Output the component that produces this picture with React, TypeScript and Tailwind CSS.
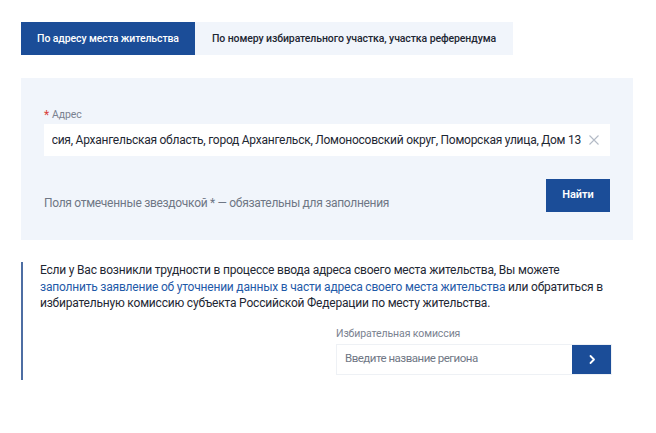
import React from "react";

const font = { fontFamily: "Roboto, 'Noto Sans', sans-serif" };

function XIcon() {
  return (
    <svg width="12" height="12" viewBox="0 0 12 12" fill="none" stroke="#b3bac6" strokeWidth="1.1">
      <path d="M1.5 1.5 L10.5 10.5 M10.5 1.5 L1.5 10.5" />
    </svg>
  );
}

function Chevron() {
  return (
    <svg width="8" height="11" viewBox="0 0 8 11" fill="none" stroke="#ffffff" strokeWidth="1.8" strokeLinecap="round" strokeLinejoin="round">
      <path d="M2.5 2 L6 5.5 L2.5 9" />
    </svg>
  );
}

export default function App() {
  return (
    <div className="w-[656px] h-[433px] bg-white px-[21px] pt-[22px] text-[#1e2733]" style={font}>
      <div className="flex h-[33px]">
        <div className="w-[174px] bg-[#1b4d98] text-white text-[10.5px] tracking-[-0.1px] font-medium flex items-center justify-center whitespace-nowrap">
          По адресу места жительства
        </div>
        <div className="w-[318px] bg-[#f1f5fb] text-[#1e2733] text-[10.5px] tracking-[-0.1px] font-medium flex items-center justify-center whitespace-nowrap">
          По номеру избирательного участка, участка референдума
        </div>
      </div>

      <div className="mt-[23px] w-[612px] h-[162px] bg-[#f1f5fb] px-[23px] pt-[30px] flex flex-col">
        <div className="text-[10.5px] tracking-[-0.1px] leading-[14px] text-[#7a8290] flex items-center gap-[3px]">
          <span className="text-[#d9413a] text-[12px] leading-[14px]">*</span>
          <span>Адрес</span>
        </div>
        <div className="mt-[2px] h-[32px] bg-white flex items-center pl-[8px] pr-[10px] gap-[7px]">
          <div className="flex-1 flex justify-end overflow-hidden whitespace-nowrap text-[12px] tracking-[-0.25px] text-[#1e2733]">
            <span>Россия, Архангельская область, город Архангельск, Ломоносовский округ, Поморская улица, Дом 13</span>
          </div>
          <XIcon />
        </div>
        <div className="mt-[23px] flex items-end justify-between">
          <span className="text-[12px] tracking-[-0.3px] leading-[17px] text-[#6f7785]">
            Поля отмеченные звездочкой * — обязательны для заполнения
          </span>
          <button className="w-[64px] h-[33px] bg-[#1b4d98] text-white text-[11px] font-semibold flex items-center justify-center">
            Найти
          </button>
        </div>
      </div>

      <div className="mt-[22px] border-l-2 border-[#4d6ea3] pl-[17px] pr-[23px] h-[118px] flex flex-col">
        <p className="text-[12px] tracking-[-0.2px] leading-[16.5px] text-[#1e2733]">
          Если у Вас возникли трудности в процессе ввода адреса своего места жительства, Вы можете{" "}
          <span className="text-[#1f5aa8]">заполнить заявление об уточнении данных в части адреса своего места жительства</span>{" "}
          или обратиться в избирательную комиссию субъекта Российской Федерации по месту жительства.
        </p>
        <div className="ml-auto w-[276px] mt-[15px]">
          <div className="text-[10.5px] tracking-[-0.1px] leading-[14px] text-[#7a8290]">Избирательная комиссия</div>
          <div className="mt-[3px] h-[31px] flex border border-[#eef1f5] bg-white">
            <div className="flex-1 flex items-center pl-[8px] text-[11.5px] tracking-[-0.5px] text-[#6f7785]">Введите название региона</div>
            <div className="w-[39px] bg-[#1b4d98] flex items-center justify-center">
              <Chevron />
            </div>
          </div>
        </div>
      </div>
    </div>
  );
}
